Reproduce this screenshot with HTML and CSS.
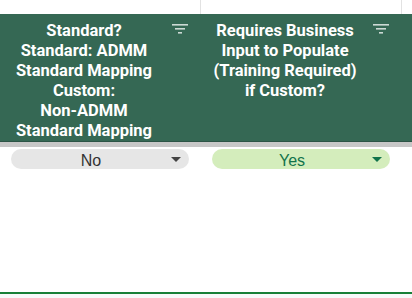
FILE: index.html
```html
<!DOCTYPE html>
<html lang="en">
<head>
    <meta charset="UTF-8">
    <meta name="viewport" content="width=device-width, initial-scale=1.0">
    <title>Mapping Sheet</title>
    <link rel="stylesheet" href="styles.css">
</head>
<body>
    <div class="sheet">
        <!-- row above the frozen header -->
        <div class="row top-row">
            <div class="cell"></div>
            <div class="cell"></div>
            <div class="cell last"></div>
        </div>

        <div class="row header-row">
            <div class="cell head">
                <div class="head-text">Standard?<br>Standard: ADMM<br>Standard Mapping<br>Custom:<br>Non-ADMM<br>Standard Mapping</div>
                <svg class="filter" width="16" height="10" viewBox="0 0 16 10">
                    <rect x="0" y="0" width="16" height="1.6" />
                    <rect x="3" y="4" width="10" height="1.6" />
                    <rect x="6" y="8" width="4" height="1.6" />
                </svg>
            </div>
            <div class="cell head">
                <div class="head-text">Requires Business<br>Input to Populate<br>(Training Required)<br>if Custom?</div>
                <svg class="filter" width="16" height="10" viewBox="0 0 16 10">
                    <rect x="0" y="0" width="16" height="1.6" />
                    <rect x="3" y="4" width="10" height="1.6" />
                    <rect x="6" y="8" width="4" height="1.6" />
                </svg>
            </div>
            <div class="cell head last"></div>
        </div>

        <div class="freeze-bar"></div>

        <div class="row data-row">
            <div class="cell">
                <div class="chip chip-no">
                    <span class="chip-text">No</span>
                    <span class="arrow"></span>
                </div>
            </div>
            <div class="cell">
                <div class="chip chip-yes">
                    <span class="chip-text">Yes</span>
                    <span class="arrow"></span>
                </div>
            </div>
            <div class="cell last"></div>
        </div>

        <div class="filler"></div>
        <div class="bottom-bar"></div>
    </div>
</body>
</html>
```

FILE: styles.css
```css
body {
    margin: 0;
    background-color: #fff;
    font-family: 'Liberation Sans', Arial, sans-serif;
}

.sheet {
    width: 412px;
    height: 298px;
    display: flex;
    flex-direction: column;
    overflow: hidden;
}

.row {
    display: grid;
    grid-template-columns: 201px 201px 1fr;
}

.cell {
    border-right: 1px solid #e2e2e2;
}

.cell.last {
    border-right: none;
}

.top-row {
    height: 14px;
}

.header-row {
    height: 127px;
    background-color: #356854;
}

.head {
    position: relative;
    border-right: none;
    padding: 7px 35px 0 2px;
}

.head-text {
    color: #fff;
    font-family: Roboto, 'Liberation Sans', sans-serif;
    font-weight: 700;
    font-size: 16.5px;
    line-height: 20px;
    text-align: center;
    white-space: nowrap;
}

.filter {
    position: absolute;
    top: 10px;
    left: 172px;
    fill: rgba(255, 255, 255, 0.75);
}

.freeze-bar {
    height: 6px;
    border-top: 1px solid #2c5446;
    background-color: #c7c7c7;
    box-sizing: border-box;
}

.data-row {
    height: 26px;
    padding-top: 2px;
    box-sizing: border-box;
}

.data-row .cell {
    border-right: none;
}

.chip {
    display: flex;
    align-items: center;
    width: 178px;
    height: 20px;
    margin-left: 11px;
    border-radius: 10px;
    font-size: 16px;
}

.chip-text {
    width: 160px;
    text-align: center;
    padding-top: 4px;
}

.arrow {
    width: 0;
    height: 0;
    border-left: 5px solid transparent;
    border-right: 5px solid transparent;
    border-top: 5px solid #444;
}

.chip-no {
    background-color: #e6e6e6;
    color: #333;
}

.chip-yes {
    background-color: #d4edbc;
    color: #11734b;
}

.chip-yes .arrow {
    border-top-color: #11734b;
}

.filler {
    flex: 1;
}

.bottom-bar {
    height: 6px;
    border-top: 2px solid #188038;
    background-color: #f8f9fa;
    box-sizing: border-box;
}
```
